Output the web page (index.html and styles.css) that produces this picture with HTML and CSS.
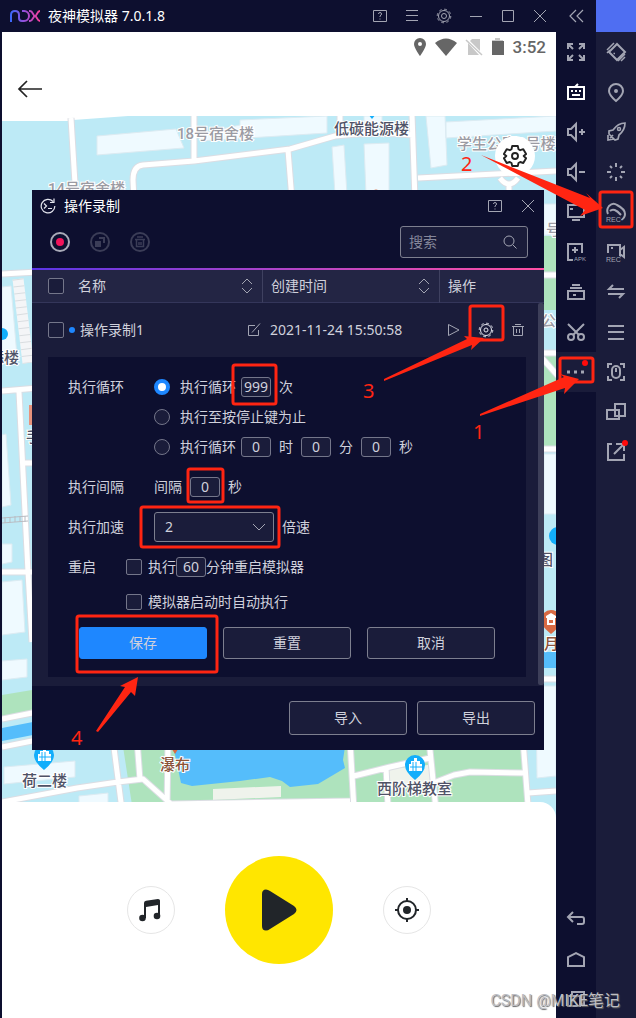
FILE: index.html
```
<!DOCTYPE html>
<html lang="zh-CN">
<head>
  <meta charset="UTF-8" />
  <meta name="viewport" content="width=device-width, initial-scale=1" />
  <title>夜神模拟器</title>
  <link rel="stylesheet" href="styles.css">
</head>
<body>

<div class="window">
  <main class="main">
    <header class="titlebar">
      <svg class="logo" width="32" height="14" viewBox="0 0 32 14" fill="none" stroke-width="2">
        <defs>
          <linearGradient id="nox" gradientUnits="userSpaceOnUse" x1="0" y1="0" x2="32" y2="0">
            <stop offset="0" stop-color="#2f6bff" />
            <stop offset="0.5" stop-color="#9a4fd8" />
            <stop offset="1" stop-color="#ff3d96" />
          </linearGradient>
        </defs>
        <g stroke="url(#nox)">
          <path d="M2 13V6q0-4 4-4t4 4v3q0 3 3 3h2a5 5 0 0 0 0-10h-2" />
          <path d="M20 2h1c3 0 3 5 5 5s2-5 5-5M20 12h1c3 0 3-5 5-5s2 5 5 5" />
        </g>
      </svg>
      <h1>夜神模拟器 7.0.1.8</h1>
      <div class="window-buttons">
        <button aria-label="帮助"><svg width="16" height="14" viewBox="0 0 16 14"><path d="M1.500 1.500h13v11h-13zM6.500 5q0-1.500 1.500-1.500T9.500 5q0 1-1.500 2v1M8 9.500v1" /></svg></button>
        <button aria-label="菜单"><svg width="14" height="14" viewBox="0 0 14 14"><path d="M1 1.500h12M1 6.500h12M1 11.500h12" /></svg></button>
        <button aria-label="设置"><svg width="16" height="16" viewBox="0 0 16 16"><circle cx="8" cy="8" r="5.500" /><circle cx="8" cy="8" r="2.500" /><circle cx="8" cy="8" r="6.800" stroke-dasharray="2.700 2.640" /></svg></button>
        <button aria-label="最小化"><svg width="14" height="14" viewBox="0 0 14 14"><path d="M1 7.500h12" /></svg></button>
        <button aria-label="最大化"><svg width="14" height="14" viewBox="0 0 14 14"><path d="M1.500 1.500h11v11h-11z" /></svg></button>
        <button aria-label="关闭"><svg width="14" height="14" viewBox="0 0 14 14"><path d="M1 1l12 12M13 1L1 13" /></svg></button>
      </div>
    </header>

    <div class="screen">
      <div class="status">
        <svg width="14" height="18" viewBox="0 0 14 18"><path fill-rule="evenodd" d="M7 0a6 6 0 0 1 6 6c0 4-6 12-6 12S1 10 1 6a6 6 0 0 1 6-6zm0 4a2 2 0 1 0 0 4 2 2 0 0 0 0-4z" /></svg>
        <svg width="22" height="18" viewBox="0 0 22 18"><path d="M0 5q11-9 22 0L11 18z" /></svg>
        <svg width="18" height="18" viewBox="0 0 18 18"><path fill="#c8c8c8" d="M7 1h8v12L5 3zM3 5l11 12H3z" /><path d="M1 2l16 15" stroke="#c8c8c8" stroke-width="1.500" /></svg>
        <svg width="14" height="18" viewBox="0 0 14 18"><path fill="#c8c8c8" d="M4 0h5v2h3v2H1V2h3z" /><path d="M1 3h12v14H1z" /></svg>
        <span>3:52</span>
      </div>
      <div class="app-bar">
        <button aria-label="返回"><svg width="26" height="18" viewBox="0 0 26 18" fill="none" stroke="#222" stroke-width="1.700"><path d="M26 9H3M11 1L3 9l8 8" /></svg></button>
      </div>

      <section class="map">
        <svg class="map-canvas" viewBox="2 116 554 702" preserveAspectRatio="xMidYMin slice">
          <rect x="2" y="116" width="554" height="702" fill="#bdeaf6" />
          <path fill="#fff" d="M2 116h126l-55 4v1H2z" />

          <!-- parks -->
          <g fill="#aee3bd">
            <path d="M122 740h400l8 78H134zM530 236h26v74h-26zM530 356h26v90h-26z" />
            <path d="M2 695l36-6v24l-36 5z" />
          </g>

          <!-- water -->
          <g fill="#55bdfb">
            <path d="M172 740l9 43 11 3 48-5 30-4 12 4 8 6 28-3 27-16-2-8 3-20z" />
            <path d="M2 728l36-7v13l-36 7zM530 652h26v16h-26z" />
          </g>

          <!-- buildings -->
          <g fill="#effaff" stroke="#dcebf2">
            <path d="M97 136l79-7 8 19-87 7zM198 134l42-9v-5l87-4v17l-127 8zM364 116h18v8h-18z" />
            <path d="M332 147l12-2 3 50h-12zM364 144l25-1v52h-23zM426 116h19l2 49-16 3zM446 122l110-6v15l-110 7z" />
            <path d="M2 287l9-1 6 70H2zM2 435l4-1 5 71-9 2zM2 544h10v18l-10 2zM2 582l20-2 3 52-23 3zM2 661l25-2v18l-25 3z" />
            <path d="M4 767l71-6v16l-71 7zM79 796l29-3v15H79zM536 686h20v90l-19 2z" />
            <path d="M544 204h12v31h-12zM544 454h12v60h-12z" />
          </g>
          <g fill="#eff3ec">
            <path d="M213 789l68-3v11l-68 3zM388 769l40-4 4 17-43 8z" />
          </g>
          <path d="M18 279l10 84" stroke="#f4f5f7" stroke-width="11" />
          <path d="M18 279l10 84" stroke="#d9dde0" stroke-width="11" stroke-dasharray="1 6" />

          <!-- roads: casing below, surface on top -->
          <g class="casing">
            <path id="roads" d="M71 118l5 82M194 114v48M134 200l-1-20q0-14 10-15l51-4 96-12 45-13q40-5 78-1M412 114l3 86M418 178l138-7M288 150l4 50M340 114v22M500 178q9 12 18 0M509 184v20M2 274l36-2M2 391l36-3M19 392l9 180 4 70M25 463h10M2 572h36M2 719l40-8M2 747l40-8M2 802l75-14 41-6 25-3 28 25 179-3M113 740l9 70M137 740l3 40M168 740l-1 70M350 740l4 70M354 776l36-9 40-9M386 767l2 40M429 740l7 70M436 782l18-7 16-3 56 1M523 740l6 78M528 793l28-2M538 275h18M538 353h18M542 358l16 18M538 449h18M538 679h18" />
          </g>
          <use href="#roads" class="surface" />
          <path d="M2 518l26-2M2 523l26-2M5 517v6M10 517v6M15 516v6M20 516v6M25 516v6" stroke="#b9bcc2" />

          <!-- pins -->
          <g fill="#12aefb">
            <path d="M34 755a10 10 0 1 1 20 0q0 7-10 15-10-8-10-15zM405 765a10 10 0 1 1 20 0q0 7-10 15-10-8-10-15z" />
            <circle cx="2" cy="334" r="6" />
            <circle cx="558" cy="536" r="9" />
            <path d="M368 114h8l-4 5z" />
          </g>
          <path id="hall" class="hall" d="M38 761v-7h2v-3h3v-3h3v3h3v3h2v7z" />
          <path id="panes" class="panes" d="M42 752v9M45 752v9M39 757h12" />
          <use href="#hall" x="371" y="10" />
          <use href="#panes" x="371" y="10" />
          <path fill="#d96a43" d="M541 620a10 10 0 1 1 20 0q0 6-10 14-10-8-10-14zM170 746h10l-5 8zM370 192h12q-6-5-12 0z" />
          <path fill="#fff" d="M546 616l5-3 5 3v2h-1v7h-8v-7h-1z" />
          <path fill="#d96a43" d="M549 620h4v3h-4z" />
          <path fill="#e7937c" d="M29 405h4v20h-4z" />

          <g class="places">
            <text class="muted" x="177" y="139">18号宿舍楼</text>
            <text class="muted" x="48" y="194">14号宿舍楼</text>
            <text class="muted" x="457" y="149">学生公寓3号楼</text>
            <text class="muted" x="546" y="235">号</text>
            <text class="muted" x="541" y="326">公</text>
            <text x="334" y="134">低碳能源楼</text>
            <text x="-11" y="363">添楼</text>
            <text x="26" y="442">手</text>
            <text x="538" y="565">图</text>
            <text x="22" y="786">荷二楼</text>
            <text x="377" y="794">西阶梯教室</text>
            <text class="spot" x="160" y="770">瀑布</text>
            <text class="spot" x="544" y="649">月</text>
          </g>
        </svg>
        <button class="map-settings" aria-label="地图设置">
          <svg width="24" height="24" viewBox="0 0 24 24" fill="none" stroke="#222" stroke-width="1.900" stroke-linejoin="round"><path d="M9.200 2h5.600l.7 3.200 1.700 1 3.100-1 2.800 4.800-2.400 2v0l2.400 2.200-2.800 4.800-3.100-1-1.700 1-.7 3H9.200l-.7-3-1.700-1-3.100 1L.9 14.200 3.300 12 .9 10l2.800-4.800 3.100 1 1.700-1z" /><circle cx="12" cy="12" r="3" /></svg>
        </button>

        <section class="dialog">
          <header class="dialog-title">
            <svg width="16" height="16" viewBox="0 0 16 16" fill="none" stroke="#e4e5ee" stroke-width="1.200"><path d="M13 3.500A6.800 6.800 0 1 0 14.800 8M14 .5v4h-4M4 5.500L6.500 8 4 10.500M8 10.500h4" /></svg>
            <h2>操作录制</h2>
            <button aria-label="帮助"><svg width="16" height="14" viewBox="0 0 16 14"><path d="M1.500 1.500h13v11h-13zM6.500 5q0-1.500 1.500-1.500T9.500 5q0 1-1.500 2v1M8 9.500v1" /></svg></button>
            <button aria-label="关闭"><svg width="14" height="14" viewBox="0 0 14 14"><path d="M1 1l12 12M13 1L1 13" /></svg></button>
          </header>

          <div class="toolbar">
            <button aria-label="录制"><svg width="20" height="20" viewBox="0 0 20 20"><circle cx="10" cy="10" r="9" fill="none" stroke="#a9abb8" stroke-width="2" /><circle cx="10" cy="10" r="4" fill="#f0145a" /></svg></button>
            <button aria-label="合并" disabled><svg width="20" height="20" viewBox="0 0 20 20" fill="none" stroke="#3b3d57" stroke-width="2"><circle cx="10" cy="10" r="9" /><path fill="#3b3d57" stroke="none" d="M5 9h6v6H5z" /><path d="M9 6h5v5" /></svg></button>
            <button aria-label="删除" disabled><svg width="20" height="20" viewBox="0 0 20 20" fill="none" stroke="#3b3d57" stroke-width="2"><circle cx="10" cy="10" r="9" /><path stroke-width="1.500" d="M5 7.500h10M7 5h6M6.500 8v6.500h7V8M9 10v3M11 10v3" /></svg></button>
            <label class="search">
              <input type="text" placeholder="搜索" aria-label="搜索" />
              <svg width="14" height="14" viewBox="0 0 14 14"><circle cx="6" cy="6" r="5" /><path d="M10 10l3.500 3.500" /></svg>
            </label>
          </div>

          <div class="scroll">
            <table>
              <colgroup>
                <col>
                <col class="col-time">
                <col class="col-actions">
              </colgroup>
              <thead>
                <tr>
                  <th><div class="cell"><input type="checkbox" aria-label="全选" /><span class="head-name">名称</span><svg width="12" height="16" viewBox="0 0 12 16"><path d="M1 6l5-5 5 5M1 10l5 5 5-5" /></svg></div></th>
                  <th><div class="cell">创建时间<svg width="12" height="16" viewBox="0 0 12 16"><path d="M1 6l5-5 5 5M1 10l5 5 5-5" /></svg></div></th>
                  <th><div class="cell">操作</div></th>
                </tr>
              </thead>
              <tbody>
                <tr>
                  <td><div class="cell"><input type="checkbox" aria-label="选择操作录制1" /><i class="dot"></i>操作录制1<button class="rename" aria-label="重命名"><svg width="14" height="14" viewBox="0 0 14 14"><path d="M8 2.500H1.500v10h10V7M5 9.500l8-9" /></svg></button></div></td>
                  <td>2021-11-24 15:50:58</td>
                  <td>
                    <div class="actions">
                      <button aria-label="播放"><svg width="14" height="14" viewBox="0 0 14 14"><path d="M1.500 1.500v11l10.500-5.500z" /></svg></button>
                      <button aria-label="设置" class="active"><svg width="16" height="16" viewBox="0 0 16 16"><circle cx="8" cy="8" r="5.500" /><circle cx="8" cy="8" r="2" /><circle cx="8" cy="8" r="6.800" stroke-dasharray="2.700 2.640" /></svg></button>
                      <button aria-label="删除"><svg width="14" height="14" viewBox="0 0 14 14"><path d="M1 3.500h12M4 1.500h6M2.500 4v8.500h9V4M5.500 6v4M8.500 6v4" /></svg></button>
                    </div>
                  </td>
                </tr>
                <tr>
                  <td colspan="3" class="detail">
                    <form class="settings">
                      <div class="field">
                        <span class="field-name">执行循环</span>
                        <div class="lines">
                          <div class="line">
                            <input type="radio" name="loop" id="loop-count" checked /><label for="loop-count">执行循环</label>
                            <input type="text" class="num" value="999" aria-label="次数" /><span>次</span>
                          </div>
                          <div class="line">
                            <input type="radio" name="loop" id="loop-stop" /><label for="loop-stop">执行至按停止键为止</label>
                          </div>
                          <div class="line">
                            <input type="radio" name="loop" id="loop-time" /><label for="loop-time">执行循环</label>
                            <input type="text" class="num" value="0" aria-label="时" /><span>时</span>
                            <input type="text" class="num" value="0" aria-label="分" /><span>分</span>
                            <input type="text" class="num" value="0" aria-label="秒" /><span>秒</span>
                          </div>
                        </div>
                      </div>
                      <div class="field">
                        <span class="field-name">执行间隔</span>
                        <div class="line">
                          <label for="interval">间隔</label><input type="text" class="num" id="interval" value="0" /><span>秒</span>
                        </div>
                      </div>
                      <div class="field">
                        <label class="field-name" for="speed">执行加速</label>
                        <div class="line">
                          <div class="select">
                            <select id="speed"><option>1</option><option selected>2</option><option>4</option></select>
                            <svg width="14" height="8" viewBox="0 0 14 8"><path d="M1 1l6 6 6-6" /></svg>
                          </div>
                          <span>倍速</span>
                        </div>
                      </div>
                      <div class="field restart">
                        <span class="field-name">重启</span>
                        <div class="lines">
                          <div class="line">
                            <input type="checkbox" id="restart" /><label for="restart">执行</label><input type="text" class="num" value="60" aria-label="分钟" /><span>分钟重启模拟器</span>
                          </div>
                          <div class="line">
                            <input type="checkbox" id="autorun" /><label for="autorun">模拟器启动时自动执行</label>
                          </div>
                        </div>
                      </div>
                      <div class="buttons">
                        <button type="button" class="btn primary">保存</button>
                        <button type="button" class="btn">重置</button>
                        <button type="button" class="btn">取消</button>
                      </div>
                    </form>
                  </td>
                </tr>
              </tbody>
            </table>
            <div class="scrollbar"></div>
          </div>

          <footer class="dialog-footer">
            <button class="btn">导入</button>
            <button class="btn">导出</button>
          </footer>
        </section>
      </section>

      <section class="player">
        <button class="round" aria-label="音乐"><svg width="24" height="24" viewBox="0 0 24 24" fill="#212529"><path d="M5 5q0-2 2-2.300L19 1q2 0 2 1.500V18h-2V7L7 9v11H5z" /><circle cx="3.500" cy="20" r="3.300" /><circle cx="18" cy="18" r="3.300" /></svg></button>
        <button class="play" aria-label="开始"><svg width="36" height="42" viewBox="0 0 36 42" fill="#212529"><path d="M1 5q0-4.500 4-4.500 2 0 4 1.500l24 15q5 4 0 8L9 40q-2 1.500-4 1.500-4 0-4-4.500z" /></svg></button>
        <button class="round" aria-label="定位"><svg width="26" height="26" viewBox="0 0 26 26" fill="none" stroke="#212529" stroke-width="2"><circle cx="13" cy="13" r="9" /><circle cx="13" cy="13" r="4" fill="#212529" stroke="none" /><path d="M13 1v4M13 21v4M1 13h4M21 13h4" /></svg></button>
      </section>
    </div>
  </main>

  <nav class="side">
    <button class="collapse" aria-label="收起"><svg width="16" height="14" viewBox="0 0 16 14"><path d="M8 1L2 7l6 6M15 1L9 7l6 6" stroke-width="1.200" /></svg></button>
    <button aria-label="全屏"><svg width="20" height="20" viewBox="0 0 20 20"><path d="M2 7V2h5M2 2l5 5M13 2h5v5M18 2l-5 5M2 13v5h5M2 18l5-5M18 13v5h-5M18 18l-5-5" /></svg></button>
    <button aria-label="按键" class="bright"><svg width="20" height="20" viewBox="0 0 20 20"><path d="M2 5h16v12H2zM9 5l3-3M5 9h2M9 9h2M13 9h2M6 13h8" /></svg></button>
    <button aria-label="音量加"><svg width="20" height="20" viewBox="0 0 20 20"><path d="M2 7h3l5-5v16l-5-5H2zM13 10h6M16 7v6" /></svg></button>
    <button aria-label="音量减"><svg width="20" height="20" viewBox="0 0 20 20"><path d="M2 7h3l5-5v16l-5-5H2zM13 10h6" /></svg></button>
    <button aria-label="屏幕"><svg width="20" height="20" viewBox="0 0 20 20"><path d="M2 3h16v12H2zM4 7h3M6 18h8" /></svg></button>
    <button aria-label="安装APK"><svg width="20" height="20" viewBox="0 0 20 20"><path d="M7 18H2V2h14v9M9 5v6M6 8h6" /><text class="apk" x="8" y="19">APK</text></svg></button>
    <button aria-label="多开"><svg width="20" height="20" viewBox="0 0 20 20"><path d="M2 9h16v8H2zM7 13h3M4 6h12M6 3h8" /></svg></button>
    <button aria-label="剪切"><svg width="20" height="20" viewBox="0 0 20 20"><circle cx="5" cy="15" r="3" /><circle cx="15" cy="15" r="3" /><path d="M2 2l11 11M18 2L7 13" /></svg></button>
    <button aria-label="更多" class="current"><svg width="20" height="20" viewBox="0 0 20 20"><path d="M1 10h3M8 10h3M15 10h3" stroke-width="3" /></svg><i class="badge"></i></button>
    <div class="android-keys">
      <button aria-label="返回"><svg width="20" height="20" viewBox="0 0 20 20"><path d="M7 4L2 9l5 5M2 9h14q2 0 2 2v3q0 2-2 2h-5" /></svg></button>
      <button aria-label="主页"><svg width="20" height="20" viewBox="0 0 20 20"><path d="M2 18V9l8-4 8 4v9z" /></svg></button>
      <button aria-label="最近任务"><svg width="20" height="20" viewBox="0 0 20 20"><path d="M6 7V4h12v12h-3M2 8h12v10H2z" /></svg></button>
    </div>
  </nav>

  <nav class="side extra">
    <div class="accent"></div>
    <button aria-label="摇一摇"><svg width="20" height="20" viewBox="0 0 20 20"><path d="M11 2l8 8-8 8-8-8z" /><path stroke-width="1.500" d="M7.500 11.500h1.500M1 8l7-7M1 11l3-3M12 19l7-7M15 19l4-4" /></svg></button>
    <button aria-label="定位"><svg width="20" height="20" viewBox="0 0 20 20"><path d="M10 2a7 7 0 0 1 7 7q0 4-7 10-7-6-7-10a7 7 0 0 1 7-7z" /><circle cx="10" cy="9" r="1" /></svg></button>
    <button aria-label="加速"><svg width="20" height="20" viewBox="0 0 20 20"><path stroke-width="1.700" d="M19 1q-7 0-12 7l-4 1v3l6 6 3-1 1-4q6-5 6-12zM2 13v5l6-1M4 16l3-3" /><circle cx="13" cy="7" r="1.500" stroke-width="1.500" /></svg></button>
    <button aria-label="清理"><svg width="20" height="20" viewBox="0 0 20 20"><path d="M10 1v4M10 15v4M1 10h4M15 10h4M4 4l2 2M14 14l2 2M16 4l-2 2M4 16l2-2" /></svg></button>
    <button aria-label="操作录制"><svg width="20" height="20" viewBox="0 0 20 20"><path d="M2 12Q0 8 3 4q4-4 8-1 8 4 8 9 0 4-4 6M4 9q4-4 11 4" /><text x="0" y="20">REC</text></svg></button>
    <button aria-label="视频录制"><svg width="20" height="20" viewBox="0 0 20 20"><path d="M2 11V3h12v13M14 8l4-3v10l-4-3M5 6h2" /><text x="0" y="20">REC</text></svg></button>
    <button aria-label="传输"><svg width="20" height="20" viewBox="0 0 20 20"><path d="M18 7H3l4-4M2 12h15l-4 4" /></svg></button>
    <button aria-label="列表"><svg width="20" height="20" viewBox="0 0 20 20"><path d="M2 4h16M2 10h16M2 17h16" /></svg></button>
    <button aria-label="虚拟按键"><svg width="20" height="20" viewBox="0 0 20 20"><path d="M2 6V2h4M14 2h4v4M18 14v4h-4M6 18H2v-4M10 6v4" /><rect x="6" y="4" width="8" height="12" rx="4" /></svg></button>
    <button aria-label="多窗口"><svg width="20" height="20" viewBox="0 0 20 20"><path d="M9 2h10v12H9zM1 8h12v9H1z" /></svg></button>
    <button aria-label="分享"><svg width="20" height="20" viewBox="0 0 20 20"><path d="M6 2H2v16h16v-6M8 12L18 2M10 2h8v7" /></svg><i class="badge"></i></button>
  </nav>

  <!-- step marks -->
  <svg class="marks" viewBox="0 0 636 1018">
    <g fill="none" stroke="#ff2512" stroke-width="3">
      <rect x="560" y="358" width="33" height="24" rx="2" />
      <rect x="600" y="192" width="32" height="35" rx="2" />
      <rect x="470" y="306" width="33" height="34" rx="2" />
      <rect x="233" y="365" width="43" height="39" rx="2" />
      <rect x="188" y="469" width="35" height="33" rx="2" />
      <rect x="141" y="507" width="138" height="40" rx="2" />
      <rect x="77" y="616" width="140" height="56" rx="2" />
    </g>
    <g fill="#ff2512">
      <path d="M481 155l109 43-4-5 17 15-23 8 5-6z" />
      <path d="M384 379l83-40-3-3 20 2-13 12 1-5-88 36z" />
      <path d="M480 414l84-37-4-3 19 5-15 15 1-6-85 28z" />
      <path d="M96 731l29-44-5-1 18-9-3 19-4-4-33 40z" />
      <text x="473" y="439">1</text>
      <text x="461" y="171">2</text>
      <text x="363" y="398">3</text>
      <text x="71" y="745">4</text>
    </g>
  </svg>
  <div class="watermark">CSDN @MIKE笔记</div>
</div>

</body>
</html>
```
FILE: styles.css
```
* {
  box-sizing: border-box;
}

body {
  margin: 0;
  background: #0d0f2f;
  color: #d0d1dc;
  font-family: "Noto Sans", "Noto Sans CJK SC", sans-serif;
  font-size: 14px;
  line-height: 20px;
}

button {
  padding: 0;
  border: none;
  background: none;
  color: inherit;
  font: inherit;
  cursor: pointer;
}

h1, h2 {
  margin: 0;
  font-size: 14px;
  font-weight: 400;
  color: #fff;
}

svg {
  display: block;
  flex: none;
}

.window {
  position: relative;
  display: flex;
  min-height: 100vh;
  overflow: hidden;
}

.main {
  flex: 1;
  min-width: 0;
  display: flex;
  flex-direction: column;
}

/* title bar */
.titlebar {
  display: flex;
  align-items: center;
  height: 32px;
  padding-left: 9px;
}

.logo {
  margin-right: 7px;
}

.window-buttons {
  display: flex;
  margin-left: auto;
}

.window-buttons button {
  display: grid;
  place-items: center;
  width: 32px;
  height: 32px;
}

.window-buttons svg,
.collapse svg,
.dialog-title button svg,
.search svg,
.cell svg,
.actions svg,
.select svg {
  fill: none;
  stroke: #a3a5b3;
}

/* phone screen */
.screen {
  flex: 1;
  display: flex;
  flex-direction: column;
  margin-left: 2px;
  background: #fff;
}

.status {
  display: flex;
  align-items: center;
  justify-content: flex-end;
  gap: 8px;
  height: 30px;
  padding-right: 10px;
  fill: #666;
  color: #666;
  font-family: Roboto, sans-serif;
  font-size: 17px;
  font-weight: 500;
}

.app-bar {
  display: flex;
  align-items: center;
  height: 54px;
  padding-left: 14px;
}

.map {
  position: relative;
  padding: 74px 12px 68px 30px;
}

.map-canvas {
  position: absolute;
  inset: 0;
  width: 100%;
  height: 100%;
}

.casing {
  fill: none;
  stroke: #dbdde3;
  stroke-width: 7;
}

.surface {
  fill: none;
  stroke: #fff;
  stroke-width: 5;
}

.casing path {
  stroke-linejoin: round;
}

.hall {
  fill: #fff;
}

.panes {
  stroke: #12aefb;
}

.places {
  fill: #4f5266;
  stroke: #fff;
  stroke-width: 2;
  paint-order: stroke;
  font-family: Roboto, "Noto Sans CJK SC", sans-serif;
  font-size: 15px;
  font-weight: 500;
}

.places .muted {
  fill: #9b9ba3;
}

.places .spot {
  fill: #8a5238;
}

.map-settings {
  position: absolute;
  top: 20px;
  right: 21px;
  display: grid;
  place-items: center;
  width: 40px;
  height: 40px;
  border-radius: 50%;
  background: #fff;
}

/* recorder dialog */
.dialog {
  position: relative;
  background: #0d0f2f;
}

.dialog-title {
  display: flex;
  align-items: center;
  height: 32px;
  padding: 0 9px 0 8px;
}

.dialog-title h2 {
  flex: 1;
  margin-left: 8px;
}

.dialog-title button {
  margin-left: 18px;
}

.toolbar {
  display: flex;
  align-items: center;
  gap: 20px;
  height: 48px;
  padding: 0 16px 6px 18px;
  border-bottom: 2px solid;
  border-image: linear-gradient(to right, #5a35e6, #b244c8, #ff4fa3) 1;
}

.search {
  display: flex;
  align-items: center;
  width: 128px;
  height: 32px;
  margin-left: auto;
  padding: 0 10px 0 8px;
  border: 1px solid #7d7f8f;
  border-radius: 3px;
  background: #1a1c3a;
}

.search input {
  flex: 1;
  min-width: 0;
  padding: 0;
  border: none;
  background: none;
  color: #d0d1dc;
  font: inherit;
}

.search input::placeholder {
  color: #85879a;
}

.scroll {
  position: relative;
  background: #1a1c3a;
}

.scrollbar {
  position: absolute;
  top: 33px;
  right: 0;
  bottom: 1px;
  width: 6px;
  border-radius: 2px;
  background: #3d3f59;
}

table {
  width: 100%;
  border-collapse: separate;
  border-spacing: 0;
  table-layout: fixed;
}

.col-time {
  width: 177px;
}

.col-actions {
  width: 104px;
}

th {
  height: 33px;
  padding: 0 9px 0 8px;
  border-bottom: 1px solid #34365a;
  border-right: 1px solid #3f4160;
  background: #232544;
  font-weight: 400;
  text-align: left;
}

th:last-child {
  border-right: none;
}

td {
  height: 54px;
  padding: 0 2px 0 7px;
}

th:first-child,
td:first-child {
  padding-left: 16px;
}

.cell {
  display: flex;
  align-items: center;
}

th svg,
.rename {
  margin-left: auto;
}

.head-name {
  margin-left: 14px;
}

.dot {
  width: 6px;
  height: 6px;
  margin: 0 5px;
  border-radius: 50%;
  background: #1e87ff;
}

.actions {
  display: flex;
  align-items: center;
  gap: 17px;
}

.actions .active svg {
  stroke: #e4e5ee;
}

input[type="checkbox"],
input[type="radio"] {
  flex: none;
  appearance: none;
  width: 16px;
  height: 16px;
  margin: 0;
  border: 1px solid #74768a;
  border-radius: 2px;
  background: #1a1c3a;
}

input[type="radio"] {
  border-radius: 50%;
}

input[type="radio"]:checked {
  border: 4px solid #1e87ff;
  background: #fff;
}

td.detail {
  height: auto;
  padding: 0 18px 9px 16px;
}

.settings {
  padding: 15px 20px 18px;
  background: #0d0f2f;
}

.field {
  display: flex;
  margin-bottom: 10px;
}

.field-name {
  width: 86px;
  line-height: 30px;
}

.line {
  display: flex;
  align-items: center;
  height: 30px;
}

.line input[type="radio"] {
  margin-right: 10px;
}

.line input[type="checkbox"] {
  margin-right: 6px;
}

.restart .field-name {
  width: 58px;
}

.restart .line + .line {
  margin-top: 5px;
}

.num {
  width: 30px;
  height: 20px;
  margin: 0 8px 0 5px;
  padding: 0;
  border: 1px solid #74768a;
  border-radius: 3px;
  background: #1a1c3a;
  color: #d0d1dc;
  font: inherit;
  text-align: center;
}

.line span + .num,
#interval {
  margin-left: 8px;
}

.restart .num {
  margin: 0;
}

.select {
  position: relative;
  width: 120px;
  margin-right: 8px;
}

.select select {
  appearance: none;
  display: block;
  width: 100%;
  height: 30px;
  padding: 0 10px;
  border: 1px solid #7d7f8f;
  border-radius: 3px;
  background: #1a1c3a;
  color: #d0d1dc;
  font: inherit;
}

.select svg {
  position: absolute;
  top: 11px;
  right: 8px;
  pointer-events: none;
}

.buttons {
  display: flex;
  gap: 16px;
  margin-left: 11px;
}

.btn {
  width: 128px;
  height: 32px;
  border: 1px solid #7d7f8f;
  border-radius: 3px;
  background: #1a1c3a;
}

.btn.primary {
  border-color: #1e87ff;
  background: #1e87ff;
}

.dialog-footer {
  display: flex;
  justify-content: flex-end;
  gap: 10px;
  padding: 15px 9px;
}

.dialog-footer .btn {
  width: 118px;
  height: 34px;
}

/* player */
.player {
  position: relative;
  flex: 1;
  display: flex;
  align-items: center;
  justify-content: center;
  gap: 50px;
  min-height: 180px;
  margin-top: -16px;
  border-radius: 0 16px 0 0;
  background: #fff;
}

.player button {
  display: grid;
  place-items: center;
  border-radius: 50%;
}

.player .round {
  width: 48px;
  height: 48px;
  border: 1px solid #e6e6e6;
}

.player .play {
  width: 108px;
  height: 108px;
  background: #ffe600;
}

/* side toolbars */
.side {
  flex: none;
  display: flex;
  flex-direction: column;
  width: 40px;
}

.side button {
  position: relative;
  display: grid;
  place-items: center;
  width: 40px;
  height: 40px;
  fill: none;
  stroke: #a3a5b3;
  stroke-width: 2;
}

.side .collapse {
  height: 32px;
}

.side .bright {
  stroke: #fff;
}

.side .current,
.extra {
  background: #1a1c3a;
}

.side text {
  fill: #a3a5b3;
  stroke: #1a1c3a;
  stroke-width: 2;
  paint-order: stroke;
  font-family: "Liberation Sans", sans-serif;
  font-size: 7px;
}

.side svg {
  overflow: visible;
}

.side .apk {
  stroke: #0d0f2f;
  font-size: 6px;
}

.accent {
  height: 32px;
  background: #4f6ef2;
}

.badge {
  position: absolute;
  top: 8px;
  right: 8px;
  width: 6px;
  height: 6px;
  border-radius: 50%;
  background: #ff0a0a;
}

.android-keys {
  margin-top: auto;
}

/* step marks and watermark */
.marks {
  position: absolute;
  top: 0;
  left: 0;
  width: 100%;
  pointer-events: none;
  font-size: 20px;
}

.watermark {
  position: absolute;
  right: 16px;
  bottom: 7px;
  color: #bdbdc2;
  font-family: Roboto, "Noto Sans CJK SC", sans-serif;
  font-size: 16px;
  text-shadow: 1px 1px 1px #666;
}
```
